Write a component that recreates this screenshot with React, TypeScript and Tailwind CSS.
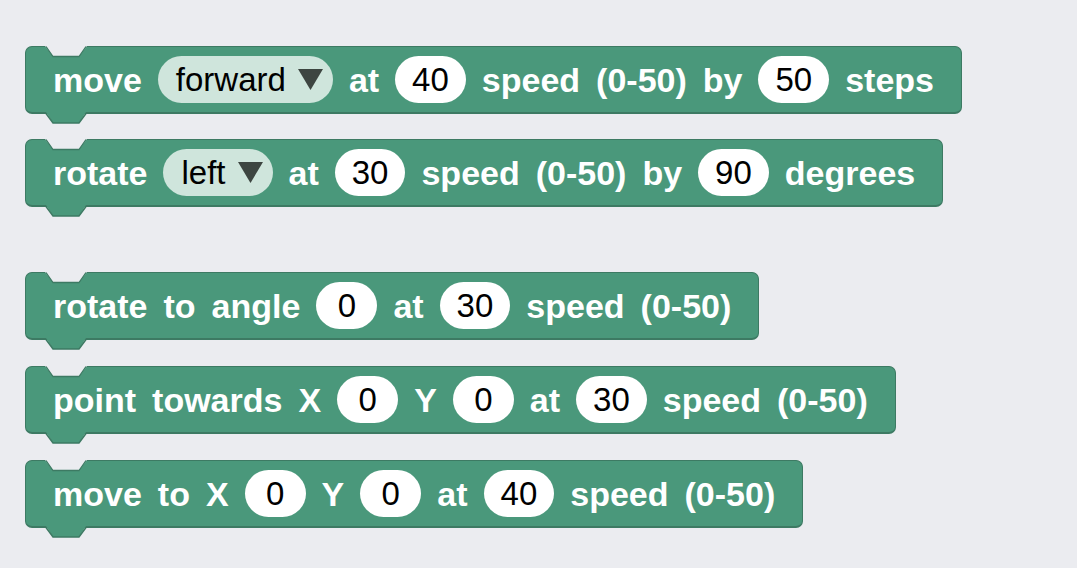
type Token =
  | { kind: "label"; text: string }
  | { kind: "num"; text: string }
  | { kind: "drop"; text: string };

const L = (text: string): Token => ({ kind: "label", text });
const N = (text: string): Token => ({ kind: "num", text });
const D = (text: string): Token => ({ kind: "drop", text });

const blocks: { id: string; gap: string; tokens: Token[] }[] = [
  {
    id: "move",
    gap: "mt-0",
    tokens: [L("move"), D("forward"), L("at"), N("40"), L("speed"), L("(0-50)"), L("by"), N("50"), L("steps")],
  },
  {
    id: "rotate",
    gap: "mt-[25px]",
    tokens: [L("rotate"), D("left"), L("at"), N("30"), L("speed"), L("(0-50)"), L("by"), N("90"), L("degrees")],
  },
  {
    id: "rotate-to",
    gap: "mt-[65px]",
    tokens: [L("rotate"), L("to"), L("angle"), N("0"), L("at"), N("30"), L("speed"), L("(0-50)")],
  },
  {
    id: "point",
    gap: "mt-[26px]",
    tokens: [L("point"), L("towards"), L("X"), N("0"), L("Y"), N("0"), L("at"), N("30"), L("speed"), L("(0-50)")],
  },
  {
    id: "move-to",
    gap: "mt-[26px]",
    tokens: [L("move"), L("to"), L("X"), N("0"), L("Y"), N("0"), L("at"), N("40"), L("speed"), L("(0-50)")],
  },
];

function Field({ token }: { token: Token }) {
  if (token.kind === "label") {
    return <span className="text-[34px] font-bold leading-none text-white">{token.text}</span>;
  }
  if (token.kind === "num") {
    return (
      <span className="flex h-[47px] min-w-[61px] items-center justify-center rounded-full bg-white px-[17px] text-[33px] leading-none text-black">
        {token.text}
      </span>
    );
  }
  return (
    <span className="flex h-[47px] items-center gap-[12px] rounded-full bg-[#cfe5dc] pl-[18px] pr-[10px] text-[33px] leading-none text-black">
      {token.text}
      <svg width="25" height="21" viewBox="0 0 25 21">
        <polygon points="0,0 25,0 12.5,21" fill="#3d4541" />
      </svg>
    </span>
  );
}

function Block({ tokens, gap }: { tokens: Token[]; gap: string }) {
  return (
    <div
      className={`relative flex h-[68px] items-center gap-[16px] rounded-[7px] border border-b-2 border-[#3d7a63] bg-[#4a987b] pl-[27px] pr-[27px] ${gap}`}
    >
      {/* notch on top */}
      <svg className="absolute left-[-1px] top-[-1px]" width="70" height="12" viewBox="0 0 70 12">
        <polygon points="20,0 28,10.5 54,10.5 62,0" fill="#ebecf0" />
        <polyline points="21,0.5 28,10.5 54,10.5 61,0.5" fill="none" stroke="#3d7a63" strokeWidth="1.3" />
      </svg>
      {/* tab below */}
      <svg className="absolute bottom-[-12px] left-[-1px]" width="70" height="12" viewBox="0 0 70 12">
        <polygon points="21,0 28,11 54,11 61,0" fill="#4a987b" />
        <polyline points="21,1.5 28,11 54,11 61,1.5" fill="none" stroke="#3d7a63" strokeWidth="1.5" />
      </svg>
      {tokens.map((t, i) => (
        <Field key={i} token={t} />
      ))}
    </div>
  );
}

export default function App() {
  return (
    <div
      className="flex h-screen w-full flex-col items-start overflow-hidden bg-[#ebecf0] pl-[25px] pt-[46px]"
      style={{ fontFamily: '"Liberation Sans", Arial, sans-serif' }}
    >
      {blocks.map((b) => (
        <Block key={b.id} tokens={b.tokens} gap={b.gap} />
      ))}
    </div>
  );
}
